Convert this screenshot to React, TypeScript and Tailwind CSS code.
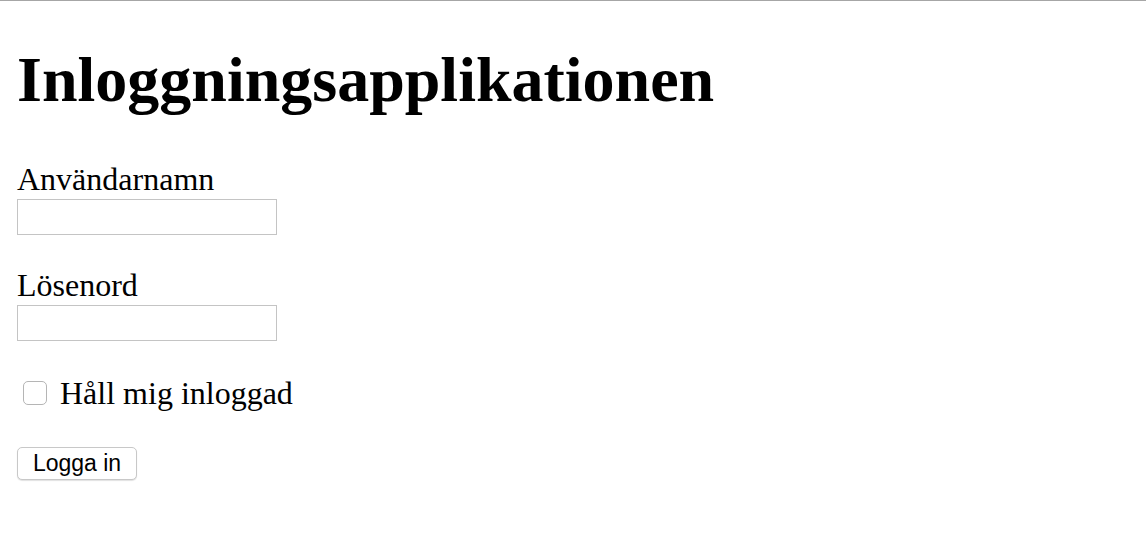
import React from 'react';

const App: React.FC = () => {
  return (
    <div className="min-h-[544px] w-full border-t border-[#a6a6a6] bg-white text-black" style={{ fontFamily: '"Liberation Serif", "Times New Roman", serif' }}>
      <div className="px-[17px] pt-[37px]">
        <h1 className="text-[64px] font-bold leading-[84px]">Inloggningsapplikationen</h1>

        <form className="mt-[43px] flex flex-col">
          <label htmlFor="username" className="text-[32px] leading-[28px]">Användarnamn</label>
          <input id="username" type="text" className="mt-[6px] h-[36px] w-[260px] border border-[#c4c4c4] bg-white" />

          <label htmlFor="password" className="mt-[36px] text-[32px] leading-[28px]">Lösenord</label>
          <input id="password" type="password" className="mt-[6px] h-[36px] w-[260px] border border-[#c4c4c4] bg-white" />

          <label className="mt-[36px] flex items-center text-[32px] leading-[32px]">
            <span className="ml-[6px] mr-[13px] inline-block h-[24px] w-[24px] rounded-[5px] border border-[#b5b5b5] bg-white" />
            Håll mig inloggad
          </label>

          <div className="mt-[38px]">
            <button
              type="button"
              className="h-[33px] w-[120px] rounded-[5px] border border-[#c8c8c8] bg-white text-[23px] leading-none shadow-[0_1px_1px_rgba(0,0,0,0.12)]"
              style={{ fontFamily: '"Liberation Sans", Arial, sans-serif' }}
            >
              Logga in
            </button>
          </div>
        </form>
      </div>
    </div>
  );
};

export default App;
